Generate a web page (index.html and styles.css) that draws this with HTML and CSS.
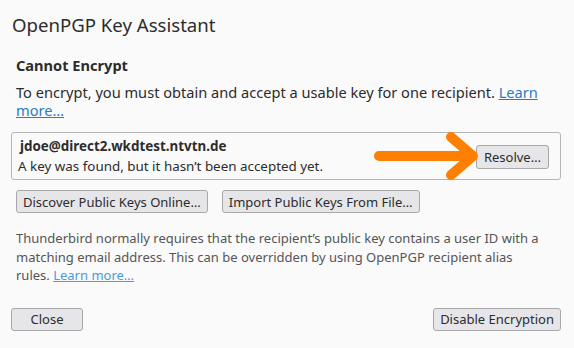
FILE: index.html
```html
<!DOCTYPE html>
<html lang="en">
<head>
<meta charset="UTF-8">
<meta name="viewport" content="width=device-width, initial-scale=1.0">
<title>OpenPGP Key Assistant</title>
<link rel="stylesheet" href="styles.css">
</head>
<body>
<div class="dialog">
  <h1 class="title">OpenPGP Key Assistant</h1>
  <div class="section">
    <h2>Cannot Encrypt</h2>
    <p class="intro">To encrypt, you must obtain and accept a usable key for one recipient. <a href="#">Learn more…</a></p>
  </div>
  <div class="recipient">
    <div class="recipient-info">
      <div class="email">jdoe@direct2.wkdtest.ntvtn.de</div>
      <div class="status">A key was found, but it hasn’t been accepted yet.</div>
    </div>
    <button class="btn resolve">Resolve…</button>
    <svg class="arrow" width="112" height="48" viewBox="0 0 112 48">
      <path d="M6 24 H100 M78 5 L100 24 L78 43" fill="none" stroke="#ff8000" stroke-width="10" stroke-linecap="round" stroke-linejoin="round"/>
    </svg>
  </div>
  <div class="actions">
    <button class="btn">Discover Public Keys Online…</button>
    <button class="btn">Import Public Keys From File…</button>
  </div>
  <p class="note">Thunderbird normally requires that the recipient’s public key contains a user ID with a matching email address. This can be overridden by using OpenPGP recipient alias rules. <a href="#">Learn more…</a></p>
  <div class="footer">
    <button class="btn">Close</button>
    <button class="btn">Disable Encryption</button>
  </div>
</div>
</body>
</html>
```
FILE: styles.css
```css
body {
  font-family: "Noto Sans", "Open Sans", sans-serif;
  margin: 0;
  padding: 0;
  background: #fafafa;
  color: #2c2c2c;
}
.dialog {
  padding: 0 13px 0 11px;
}
.title {
  font-size: 18.6px;
  font-weight: normal;
  margin: 0;
  padding: 12px 0 0 1px;
  line-height: 26px;
}
.section {
  padding: 0 5px;
  margin-top: 17px;
}
.section h2 {
  font-size: 14.6px;
  margin: 0;
  line-height: 20px;
}
.intro {
  font-size: 14.6px;
  line-height: 18px;
  margin: 8px 0 0;
}
a {
  color: #2a7cc4;
}
.recipient {
  position: relative;
  margin-top: 13px;
  border: 1px solid #b4b4b4;
  border-radius: 3px;
  display: flex;
  align-items: center;
  justify-content: space-between;
  padding: 3px 11px 3px 6px;
  height: 40px;
}
.email {
  font-weight: bold;
  font-size: 13.4px;
  line-height: 20px;
  padding-left: 2px;
}
.status {
  font-size: 13.4px;
  line-height: 21px;
}
.btn {
  font-family: inherit;
  font-size: 13px;
  color: #2c2c2c;
  background: #e6e6e9;
  border: 1px solid #a8a8ac;
  border-radius: 3px;
  height: 23px;
  padding: 0 6px;
  line-height: 20px;
}
.resolve {
  height: 24px;
  margin-top: 1px;
  padding: 0 7px;
}
.arrow {
  position: absolute;
  left: 361px;
  top: -1px;
}
.actions {
  display: flex;
  gap: 14px;
  margin-top: 10px;
  padding-left: 5px;
}
.note {
  font-size: 13px;
  line-height: 18.5px;
  color: #555;
  margin: 16px 0 0;
  padding: 0 18px 0 5px;
}
.note a {
  color: #4a9cd8;
}
.footer {
  display: flex;
  justify-content: space-between;
  margin-top: 23px;
}
.footer .btn:first-child {
  width: 72px;
}
```
